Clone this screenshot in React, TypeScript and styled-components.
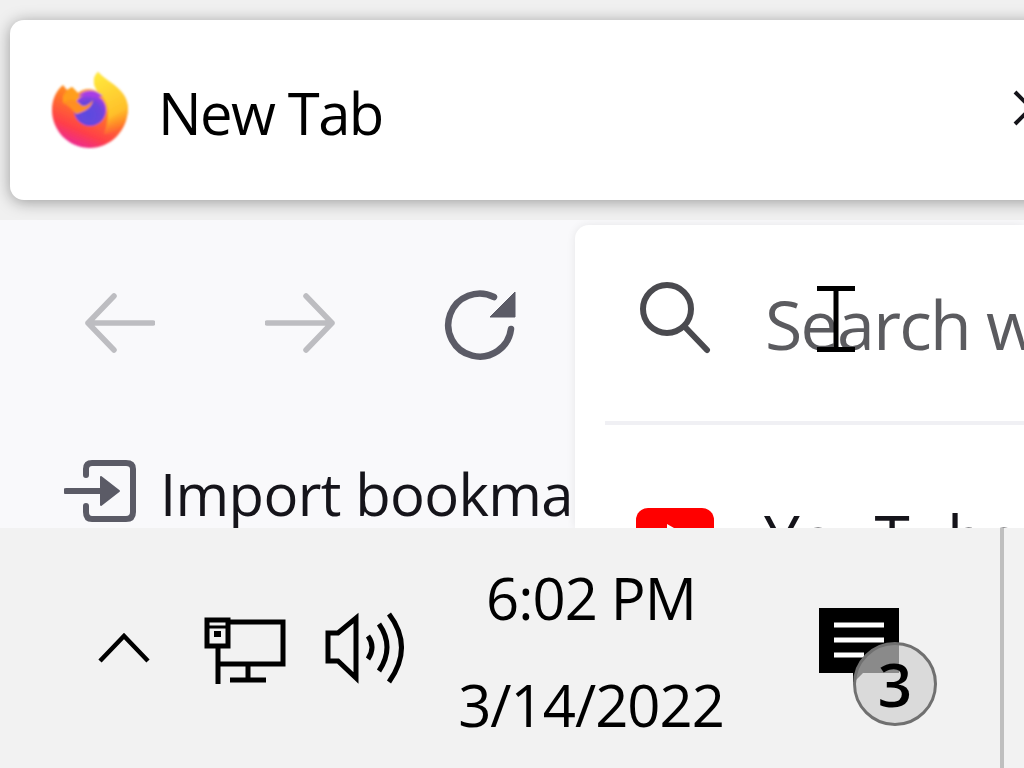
import React from 'react';
import styled, { createGlobalStyle } from 'styled-components';

const Global = createGlobalStyle`
    html, body {
        margin: 0;
        padding: 0;
        width: 1024px;
        height: 768px;
        overflow: hidden;
        background: #f9f9fb;
        font-family: "Open Sans", "Noto Sans", "Liberation Sans", sans-serif;
    }
`;

const Page = styled.div`
    width: 1024px;
    height: 768px;
    display: flex;
    flex-direction: column;
    overflow: hidden;
`;

const TabStrip = styled.div`
    flex: none;
    height: 220px;
    box-sizing: border-box;
    padding: 20px 0 20px 10px;
    background: #f0f0f0;
    overflow: hidden;
`;

const Tab = styled.div`
    width: 1100px;
    height: 180px;
    box-sizing: border-box;
    padding: 0 0 0 40px;
    display: flex;
    align-items: center;
    gap: 28px;
    background: #fff;
    border-radius: 14px 0 0 14px;
    box-shadow: 0 2px 16px rgba(0, 0, 0, 0.36);
`;

const TabTitle = styled.span`
    font-size: 58px;
    letter-spacing: -1.6px;
    color: #000;
    line-height: 1;
    padding-top: 6px;
`;

const TabClose = styled.svg`
    margin-left: 602px;
    flex: none;
`;

const Toolbar = styled.div`
    flex: none;
    height: 308px;
    display: flex;
    background: #f9f9fb;
    overflow: hidden;
`;

const NavColumn = styled.div`
    flex: none;
    width: 575px;
    box-sizing: border-box;
    padding: 65px 0 0 65px;
    display: flex;
    flex-direction: column;
    gap: 99px;
    overflow: hidden;
`;

const NavButtons = styled.div`
    display: flex;
    align-items: center;
    gap: 110px;
    padding-left: 20px;
    height: 76px;
`;

const ReloadIcon = styled.svg`
    margin-left: -1px;
`;

const Bookmark = styled.div`
    display: flex;
    align-items: center;
    gap: 24px;
    height: 62px;
    white-space: nowrap;
`;

const ImportIcon = styled.svg`
    flex: none;
    margin-left: -1px;
`;

const BookmarkLabel = styled.span`
    font-size: 58px;
    letter-spacing: -0.65px;
    color: #15141a;
    padding-top: 4px;
`;

const UrlPanel = styled.div`
    flex: 1;
    margin-top: 5px;
    box-sizing: border-box;
    padding: 0 0 0 30px;
    background: #fff;
    border-radius: 14px 0 0 0;
    box-shadow: 0 0 10px rgba(0, 0, 0, 0.08);
    overflow: hidden;
`;

const SearchRow = styled.div`
    position: relative;
    display: flex;
    align-items: center;
    gap: 54px;
    height: 200px;
    padding-left: 34px;
    box-sizing: border-box;
    border-bottom: 4px solid #f0f0f4;
    white-space: nowrap;
`;

const SearchIcon = styled.svg`
    flex: none;
    margin-top: -10px;
`;

const SearchText = styled.span`
    font-size: 68px;
    letter-spacing: -1.7px;
    color: #5b5b5f;
`;

const Cursor = styled.svg`
    position: absolute;
    left: 212px;
    top: 61px;
`;

const Result = styled.div`
    display: flex;
    align-items: flex-start;
    gap: 50px;
    padding: 83px 0 0 31px;
    white-space: nowrap;
`;

const YouTubeLogo = styled.svg`
    flex: none;
`;

const ResultLabel = styled.span`
    font-size: 64px;
    line-height: 1;
    margin-top: -2px;
    letter-spacing: -1px;
    color: #15141a;
`;

const Taskbar = styled.div`
    flex: 1;
    display: flex;
    background: #f2f2f2;
`;

const Tray = styled.div`
    flex: none;
    width: 1000px;
    display: flex;
    align-items: flex-start;
`;

const ChevronIcon = styled.svg`
    flex: none;
    margin: 105px 4px 0 98px;
`;

const NetworkIcon = styled.svg`
    flex: none;
    margin: 84px 0 0 50px;
`;

const VolumeIcon = styled.svg`
    flex: none;
    margin: 83px 0 0 38px;
`;

const Clock = styled.div`
    flex: none;
    width: 320px;
    margin-left: 23px;
    padding-top: 35px;
    display: flex;
    flex-direction: column;
    align-items: center;
    gap: 37px;
    color: #000;
    font-size: 58px;
    letter-spacing: -1px;
`;

const ClockLine = styled.span`
    line-height: 70px;
    height: 70px;
`;

const Notifications = styled.div`
    position: relative;
    flex: none;
    margin: 80px 0 0 68px;
    width: 120px;
    height: 120px;
`;

const Badge = styled.div`
    position: absolute;
    left: 34px;
    top: 34px;
    width: 84px;
    height: 84px;
    box-sizing: border-box;
    border-radius: 50%;
    border: 3px solid #707070;
    background: rgba(206, 206, 206, 0.67);
    display: flex;
    align-items: center;
    justify-content: center;
    font-size: 60px;
    font-weight: 600;
    line-height: 1;
    color: #000;
`;

const Divider = styled.div`
    flex: none;
    width: 4px;
    background: #bfbfbf;
`;

const LogoMark = styled.svg`
    flex: none;
`;

const FirefoxLogo = () => (
    <LogoMark width="80" height="80" viewBox="50 70 80 80">
        <defs>
            <linearGradient id="fxBody" x1="0.8" y1="0.1" x2="0.4" y2="1">
                <stop offset="0" stopColor="#ffc928" />
                <stop offset="0.45" stopColor="#ff7a24" />
                <stop offset="0.8" stopColor="#ff3f48" />
                <stop offset="1" stopColor="#ee2a8c" />
            </linearGradient>
            <linearGradient id="fxFlame" x1="0.3" y1="0" x2="0.6" y2="1">
                <stop offset="0" stopColor="#ffe83c" />
                <stop offset="0.7" stopColor="#ffc02a" />
                <stop offset="1" stopColor="#ff9a20" stopOpacity="0" />
            </linearGradient>
            <radialGradient id="fxGlobe" cx="0.45" cy="0.65" r="0.7">
                <stop offset="0" stopColor="#5a4be0" />
                <stop offset="0.6" stopColor="#6b45dc" />
                <stop offset="1" stopColor="#b03be8" />
            </radialGradient>
            <filter id="fxSoft">
                <feGaussianBlur stdDeviation="0.8" />
            </filter>
        </defs>
        <g filter="url(#fxSoft)">
            <path
                fill="url(#fxBody)"
                d="M52 110 C52 98 57 90 63 85 L67 90 L72 87 L78 93 C84 88 92 88 98 92 C93 84 92 78 98 72 C106 82 127 88 128 108 C128 131 110 148 90 148 C69 148 52 131 52 110Z"
            />
            <path fill="url(#fxFlame)" d="M98 72 C106 82 127 88 128 108 C128 124 116 134 104 134 C110 118 110 102 98 92 C93 86 92 78 98 72Z" />
            <path fill="#ff9e1e" d="M63 96 L67 90 L72 87 L78 93 L84 100 L78 106 C72 102 68 100 63 103Z" />
            <circle cx="90" cy="110" r="16" fill="url(#fxGlobe)" />
            <path fill="#a73ce6" d="M78 97 C84 89 94 89 103 96 C98 96 95 98 92 97 C86 95 82 95 78 97Z" />
            <path fill="#ff8f20" d="M63 103 C70 98 76 100 80 104 C83 107 87 107 93 100 C92 108 84 112 76 114 C72 109 68 105 63 103Z" />
        </g>
    </LogoMark>
);

const App = () => {
    return (
        <Page>
            <Global />
            <TabStrip>
                <Tab>
                    <FirefoxLogo />
                    <TabTitle>New Tab</TabTitle>
                    <TabClose width="40" height="40" viewBox="0 0 40 40">
                        <path d="M2 2 L34 34 M34 2 L2 34" stroke="#15141a" strokeWidth="4" fill="none" />
                    </TabClose>
                </Tab>
            </TabStrip>
            <Toolbar>
                <NavColumn>
                    <NavButtons>
                        <svg width="70" height="60" viewBox="0 0 70 60">
                            <path d="M68 30 H3 M29 3 L3 30 L29 57" stroke="#bdbdc1" strokeWidth="5.5" strokeLinecap="round" strokeLinejoin="round" fill="none" />
                        </svg>
                        <svg width="70" height="60" viewBox="0 0 70 60">
                            <path d="M2 30 H67 M41 3 L67 30 L41 57" stroke="#bdbdc1" strokeWidth="5.5" strokeLinecap="round" strokeLinejoin="round" fill="none" />
                        </svg>
                        <ReloadIcon width="72" height="80" viewBox="0 0 72 80">
                            <path d="M67 46 A31.5 31.5 0 1 1 50 14" stroke="#5b5b66" strokeWidth="6.5" strokeLinecap="round" fill="none" />
                            <path d="M71 9 V34 H46 Z" fill="#5b5b66" stroke="#5b5b66" strokeWidth="1" strokeLinejoin="round" />
                        </ReloadIcon>
                    </NavButtons>
                    <Bookmark>
                        <ImportIcon width="72" height="62" viewBox="0 0 72 62">
                            <path d="M22 15 V9 Q22 3 28 3 H62 Q69 3 69 9 V52 Q69 59 62 59 H28 Q22 59 22 52 V46" stroke="#5b5b66" strokeWidth="6" strokeLinecap="round" fill="none" />
                            <path d="M2 31 H40" stroke="#5b5b66" strokeWidth="6" strokeLinecap="round" fill="none" />
                            <path d="M37 17 L55 31 L37 45 Z" fill="#5b5b66" stroke="#5b5b66" strokeWidth="2" strokeLinejoin="round" />
                        </ImportIcon>
                        <BookmarkLabel>Import bookmarks...</BookmarkLabel>
                    </Bookmark>
                </NavColumn>
                <UrlPanel>
                    <SearchRow>
                        <SearchIcon width="72" height="72" viewBox="0 0 72 72">
                            <circle cx="28" cy="27" r="24" stroke="#4a4a4f" strokeWidth="6" fill="none" />
                            <path d="M46 45 L68 68" stroke="#4a4a4f" strokeWidth="6" strokeLinecap="round" />
                        </SearchIcon>
                        <SearchText>Search with Google or enter address</SearchText>
                        <Cursor width="38" height="66" viewBox="0 0 38 66">
                            <path d="M0 2.5 H38 M0 63.5 H38 M19 0 V66" stroke="#000" strokeWidth="5" fill="none" />
                        </Cursor>
                    </SearchRow>
                    <Result>
                        <YouTubeLogo width="78" height="56" viewBox="0 0 78 56">
                            <rect width="78" height="56" rx="12" fill="#ff0000" />
                            <path d="M31 16 L52 28 L31 40 Z" fill="#fff" />
                        </YouTubeLogo>
                        <ResultLabel>YouTube</ResultLabel>
                    </Result>
                </UrlPanel>
            </Toolbar>
            <Taskbar>
                <Tray>
                    <ChevronIcon width="52" height="30" viewBox="0 0 52 30">
                        <path d="M2 28 L26 3 L50 28" stroke="#000" strokeWidth="4.5" fill="none" />
                    </ChevronIcon>
                    <NetworkIcon width="82" height="72" viewBox="0 0 82 72">
                        <path d="M24 10 H79 V52 H14 M44 52 V68 M26 68 H62 M14 36 V72" stroke="#000" strokeWidth="5" fill="none" />
                        <rect x="3" y="8" width="21" height="26" fill="#f2f2f2" stroke="#000" strokeWidth="5" />
                        <path d="M3 15 H24" stroke="#000" strokeWidth="3" />
                        <rect x="10" y="19" width="7" height="6" fill="#000" />
                    </NetworkIcon>
                    <VolumeIcon width="84" height="74" viewBox="0 0 84 74">
                        <path d="M4 22 H14 L32 7 V67 L14 50 H4 Z" stroke="#000" strokeWidth="5" fill="none" />
                        <path d="M44 25 Q52 36 44 48 M55 13 Q71 36 55 60 M65 3 Q90 36 65 71" stroke="#000" strokeWidth="5" fill="none" />
                    </VolumeIcon>
                    <Clock>
                        <ClockLine>6:02 PM</ClockLine>
                        <ClockLine>3/14/2022</ClockLine>
                    </Clock>
                    <Notifications>
                        <svg width="84" height="80" viewBox="0 0 84 80">
                            <path d="M0 0 H80 V65 H44 L34 75 V65 H0 Z" fill="#000" />
                            <path d="M15 17 H65 M15 32 H65 M15 47 H45" stroke="#fff" strokeWidth="5" />
                        </svg>
                        <Badge>3</Badge>
                    </Notifications>
                </Tray>
                <Divider />
            </Taskbar>
        </Page>
    );
};

export default App;
